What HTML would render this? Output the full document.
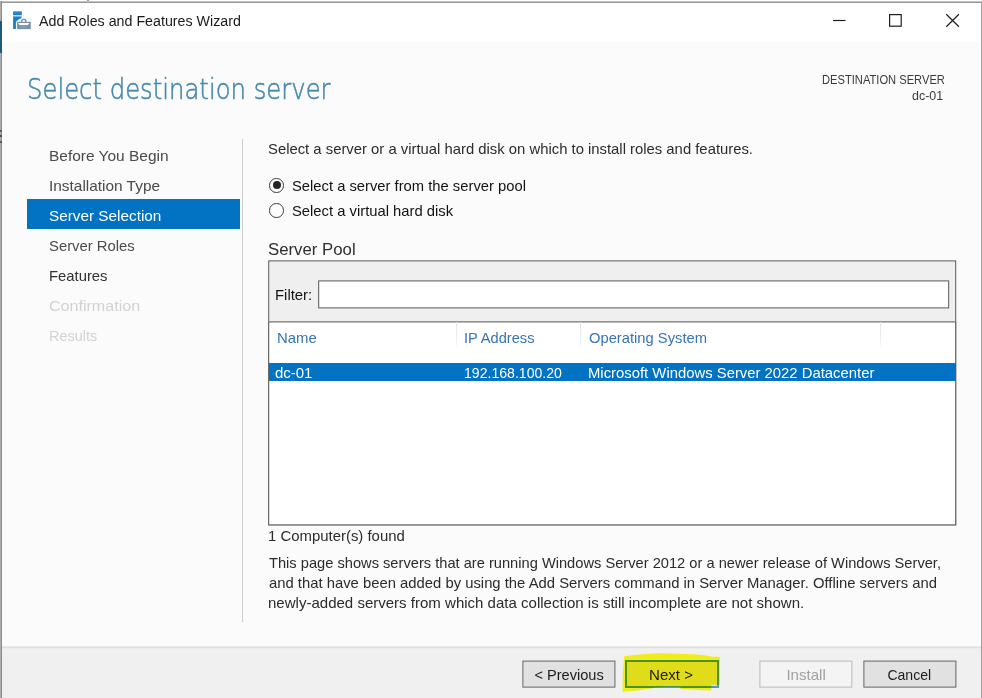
<!DOCTYPE html>
<html lang="en"><head><meta charset="utf-8"><title>Add Roles and Features Wizard</title>
<style>
html,body{margin:0;padding:0;background:#ffffff;}
#window{filter:blur(0.3px);}
body{width:982px;height:698px;overflow:hidden;background:#ffffff;position:relative;font-family:"Liberation Sans",sans-serif;}
.abs{position:absolute;}
h1,h2,p,ul,li,label{margin:0;padding:0;list-style:none;font:inherit;display:block;}
.tx{position:absolute;white-space:nowrap;transform-origin:0 50%;display:block;line-height:normal;font-weight:400;}
#edge-top1{left:0;top:1px;width:982px;height:1px;background:#c2c2c2;}
#edge-top2{left:0;top:2px;width:982px;height:1px;background:#989898;}
#edge-left{left:0;top:1px;width:2px;height:697px;background:linear-gradient(90deg,#adadad 0,#adadad 50%,#8c8c8c 50%);}
.edgemark{position:absolute;left:0;width:1.6px;background:#5e5e5e;}
#edge-left-blue{left:0;top:21px;width:2px;height:32px;background:#1f5878;}
#edge-right{left:981px;top:2px;width:1px;height:696px;background:#a2a2a2;}
#titlebar{left:2px;top:3px;width:979px;height:39px;background:#ffffff;}
#content{left:2px;top:42px;width:978px;height:604px;background:#fbfbfb;}
#footer{left:2px;top:646px;width:979px;height:52px;background:linear-gradient(#e9e9e9 0,#e9e9e9 1px,#dfdfdf 1px,#dfdfdf 2px,#ececec 2px,#ececec 3px,#f0f0f0 3px);}
#navsel{left:27px;top:199px;width:213px;height:30px;background:#0272c2;}
#vdiv{left:242px;top:139px;width:1px;height:483px;background:#cdcdcd;}
.radio{position:absolute;width:14.6px;height:14.6px;border-radius:50%;border:1.3px solid #3a3a3a;box-sizing:border-box;background:#ffffff;}
.radio i{position:absolute;left:50%;top:50%;width:8px;height:8px;margin:-4px 0 0 -4px;border-radius:50%;background:#262626;display:block;}
#poolwrap{left:0;top:0;width:982px;height:698px;transform:translate(0.2px,0.4px);}
#panel{left:268px;top:260px;width:688px;height:265px;background:#efefef;border:1px solid #5a5a5a;box-sizing:border-box;}
#filterbox{margin:0;padding:0;outline:0;border-radius:0;appearance:none;-webkit-appearance:none;left:318px;top:280px;width:631px;height:28px;background:#ffffff;border:1px solid #545454;box-sizing:border-box;}
#list{left:268px;top:321px;width:688px;height:204px;background:#ffffff;border:1px solid #4e4e4e;box-sizing:border-box;}
.colsep{position:absolute;top:322px;width:1px;height:27px;background:linear-gradient(#e2e2e2,#f0f0f0 70%,#ffffff);}
#rowsel{left:269px;top:363px;width:686.6px;height:18.2px;background:#0272c2;}
.btn{margin:0;padding:0;font:inherit;appearance:none;-webkit-appearance:none;border-radius:0;outline:0;overflow:visible;display:block;position:absolute;top:660px;width:93px;height:27px;box-sizing:border-box;border:1px solid #686868;background:#e1e1e1;transform:translate(0.4px,0.6px);}
#btn-install{background:#f4f4f4;border-color:#b8b8b8;}
#btn-next{border:2px solid #4a98d7;background:#e1e1e1;top:660px;width:94.2px;height:27.7px;transform:none;}
</style></head>
<body>
<div id="window" role="dialog" aria-label="Add Roles and Features Wizard">

<div class="abs" id="edge-tick" style="left:87px;top:0;width:2px;height:1.5px;background:#9a9a9a"></div><div class="abs" id="edge-top1"></div><div class="abs" id="edge-top2"></div>
<div class="abs" id="titlebar"></div>
<div class="abs" id="content"></div>
<div class="abs" id="footer"></div>
<div class="abs" id="edge-left"></div><div class="abs" id="edge-left-blue"></div>
<div class="abs" id="edge-right"></div>
<div class="edgemark" style="top:130.2px;height:1.6px"></div><div class="edgemark" style="top:135px;height:1.6px;background:#4e4e4e"></div><div class="edgemark" style="top:141.1px;height:1.7px"></div>

<header id="caption">
<svg class="abs" id="appicon" style="left:12px;top:10px" width="20" height="20" viewBox="0 0 20 20" aria-hidden="true">
  <rect x="1.1" y="1.4" width="8.7" height="3.7" fill="#1f7dc6"/>
  <rect x="2.2" y="2.7" width="6.5" height="0.7" fill="#3d93d6"/>
  <rect x="1.1" y="5.1" width="8.7" height="1.5" fill="#a8dff8"/>
  <path d="M1.1 6.6H9.5V8.2C7.3 8.6 5.1 10.1 3.9 12.4V19H1.1z" fill="#1f7dc6"/>
  <path d="M9.7 12.2v-.9a2.1 2.1 0 0 1 4.2 0v.9" fill="none" stroke="#d6edf9" stroke-width="2.6"/>
  <rect x="4.4" y="11.2" width="14.8" height="8.3" fill="#d6edf9"/>
  <path d="M9.7 12.2v-.9a2.1 2.1 0 0 1 4.2 0v.9" fill="none" stroke="#74899c" stroke-width="1.1"/>
  <rect x="5.1" y="11.9" width="13.6" height="7.1" fill="#7b8fa3"/>
  <path d="M6 13.1h11.3l-1.3 1.8H7.4z" fill="#ffffff"/>
  <rect x="7.6" y="15.6" width="8.2" height="2.2" fill="#8a9db0"/>
</svg>
<span id="t_title" class="tx" style="left:38.50px;top:12.00px;font-size:15.2px;color:#1a1a1a;font-family:'Liberation Sans', sans-serif;transform:scaleX(0.9377)">Add Roles and Features Wizard</span>
<svg class="abs" id="winctl" style="left:826px;top:8px" width="140" height="26" viewBox="0 0 140 26" aria-hidden="true">
  <path d="M7 12.5h12.5" stroke="#1f1f1f" stroke-width="1.2" fill="none"/>
  <rect x="63.6" y="6.6" width="11.6" height="11.6" stroke="#1f1f1f" stroke-width="1.2" fill="none"/>
  <path d="M120.3 6.3l12.6 12.4M132.9 6.3l-12.6 12.4" stroke="#1f1f1f" stroke-width="1.2" fill="none"/>
</svg>
</header>

<main id="page">
<h1><span id="t_head" class="tx" style="left:27.05px;top:72.00px;font-size:28.8px;color:#4688ad;font-family:'DejaVu Sans Light', 'DejaVu Sans', 'Liberation Sans', sans-serif;font-weight:200;-webkit-text-stroke:0.55px #4688ad;transform:scaleX(0.8442)">Select destination server</span></h1>
<div id="destserver"><span id="t_ds1" class="tx" style="left:821.85px;top:73.00px;font-size:12.4px;color:#3a3a3a;font-family:'Liberation Sans', sans-serif;transform:scaleX(0.8998)">DESTINATION SERVER</span><span id="t_ds2" class="tx" style="left:911.87px;top:89.00px;font-size:12.6px;color:#3a3a3a;font-family:'Liberation Sans', sans-serif;transform:scaleX(0.9893)">dc-01</span></div>

<nav id="steps">
<div class="abs" id="navsel"></div>
<ul>
<li><span id="t_n1" class="tx" style="left:49.19px;top:147.00px;font-size:15px;color:#4a4a4a;font-family:'Liberation Sans', sans-serif;transform:scaleX(1.0317)">Before You Begin</span></li>
<li><span id="t_n2" class="tx" style="left:48.99px;top:177.00px;font-size:15px;color:#4a4a4a;font-family:'Liberation Sans', sans-serif;transform:scaleX(1.0266)">Installation Type</span></li>
<li class="current"><span id="t_n3" class="tx" style="left:49.19px;top:207.00px;font-size:15px;color:#ffffff;font-family:'Liberation Sans', sans-serif;transform:scaleX(1.0206)">Server Selection</span></li>
<li><span id="t_n4" class="tx" style="left:49.39px;top:237.00px;font-size:15px;color:#4a4a4a;font-family:'Liberation Sans', sans-serif;transform:scaleX(0.9888)">Server Roles</span></li>
<li><span id="t_n5" class="tx" style="left:49.18px;top:267.00px;font-size:15px;color:#303030;font-family:'Liberation Sans', sans-serif;transform:scaleX(0.9878)">Features</span></li>
<li class="disabled"><span id="t_n6" class="tx" style="left:49.39px;top:297.00px;font-size:15px;color:#d2d2d2;font-family:'Liberation Sans', sans-serif;transform:scaleX(1.0715)">Confirmation</span></li>
<li class="disabled"><span id="t_n7" class="tx" style="left:49.18px;top:327.00px;font-size:15px;color:#d2d2d2;font-family:'Liberation Sans', sans-serif;transform:scaleX(0.9627)">Results</span></li>
</ul>
</nav>
<div class="abs" id="vdiv"></div>

<section id="pane">
<p><span id="t_intro" class="tx" style="left:268.32px;top:140.00px;font-size:15px;color:#2b2b2b;font-family:'Liberation Sans', sans-serif;transform:scaleX(0.9893)">Select a server or a virtual hard disk on which to install roles and features.</span></p>
<div role="radiogroup">
<label><span class="radio" id="radio1" role="radio" aria-checked="true" style="left:269.4px;top:178px"><i></i></span><span id="t_r1" class="tx" style="left:291.67px;top:177.00px;font-size:15px;color:#121212;font-family:'Liberation Sans', sans-serif;transform:scaleX(0.9845)">Select a server from the server pool</span></label>
<label><span class="radio" id="radio2" role="radio" aria-checked="false" style="left:269.4px;top:203px"></span><span id="t_r2" class="tx" style="left:291.68px;top:202.00px;font-size:15px;color:#121212;font-family:'Liberation Sans', sans-serif;transform:scaleX(0.9856)">Select a virtual hard disk</span></label>
</div>
<h2><span id="t_pool" class="tx" style="left:267.66px;top:241.00px;font-size:16px;color:#2e2e2e;font-family:'Liberation Sans', sans-serif;transform:scaleX(1.0482)">Server Pool</span></h2>
<div class="abs" id="poolwrap"><div class="abs" id="panel"></div>
<input class="abs" id="filterbox" type="text" aria-label="Filter" value="">
<div class="abs" id="list"></div></div>
<label><span id="t_filter" class="tx" style="left:275.14px;top:286.00px;font-size:15px;color:#121212;font-family:'Liberation Sans', sans-serif;transform:scaleX(0.9910)">Filter:</span></label>
<div id="grid" role="grid">
<div role="row">
<div class="colsep" style="left:456px"></div><div class="colsep" style="left:580px"></div><div class="colsep" style="left:880px"></div>
<span id="t_h1" class="tx" style="left:276.94px;top:329.00px;font-size:15px;color:#3775b5;font-family:'Liberation Sans', sans-serif;transform:scaleX(0.9940)">Name</span><span id="t_h2" class="tx" style="left:463.78px;top:329.00px;font-size:15px;color:#3775b5;font-family:'Liberation Sans', sans-serif;transform:scaleX(0.9747)">IP Address</span><span id="t_h3" class="tx" style="left:589.05px;top:329.00px;font-size:15px;color:#3775b5;font-family:'Liberation Sans', sans-serif;transform:scaleX(0.9826)">Operating System</span>
</div>
<div role="row" aria-selected="true"><div class="abs" id="rowsel"></div><span id="t_c1" class="tx" style="left:275.40px;top:364.00px;font-size:15px;color:#ffffff;font-family:'Liberation Sans', sans-serif;transform:scaleX(0.9979)">dc-01</span><span id="t_c2" class="tx" style="left:463.99px;top:364.00px;font-size:15px;color:#ffffff;font-family:'Liberation Sans', sans-serif;transform:scaleX(0.9395)">192.168.100.20</span><span id="t_c3" class="tx" style="left:588.20px;top:364.00px;font-size:15px;color:#ffffff;font-family:'Liberation Sans', sans-serif;transform:scaleX(0.9900)">Microsoft Windows Server 2022 Datacenter</span></div>
</div>
<p><span id="t_found" class="tx" style="left:268.43px;top:527.00px;font-size:15px;color:#2b2b2b;font-family:'Liberation Sans', sans-serif;transform:scaleX(0.9945)">1 Computer(s) found</span></p>
<p><span id="t_p1" class="tx" style="left:268.80px;top:554.00px;font-size:15px;color:#2b2b2b;font-family:'Liberation Sans', sans-serif;transform:scaleX(0.9770)">This page shows servers that are running Windows Server 2012 or a newer release of Windows Server,</span><span id="t_p2" class="tx" style="left:268.60px;top:574.00px;font-size:15px;color:#2b2b2b;font-family:'Liberation Sans', sans-serif;transform:scaleX(0.9883)">and that have been added by using the Add Servers command in Server Manager. Offline servers and</span><span id="t_p3" class="tx" style="left:268.40px;top:594.00px;font-size:15px;color:#2b2b2b;font-family:'Liberation Sans', sans-serif;transform:scaleX(1.0017)">newly-added servers from which data collection is still incomplete are not shown.</span></p>
</section>
</main>

<footer id="buttons">
<button class="btn" id="btn-prev" type="button" style="left:522px"><span id="t_b1" class="tx" style="left:11.33px;top:4.00px;font-size:15px;color:#1c1c1c;font-family:'Liberation Sans', sans-serif;transform:scaleX(0.9734)">&lt; Previous</span></button>
<button class="btn" id="btn-next" type="button" style="left:625px"><span id="t_b2" class="tx" style="left:22.42px;top:4.00px;font-size:15px;color:#1c1c1c;font-family:'Liberation Sans', sans-serif;transform:scaleX(1.0062)">Next &gt;</span></button>
<button class="btn" id="btn-install" type="button" disabled style="left:759px"><span id="t_b3" class="tx" style="left:25.81px;top:4.00px;font-size:15px;color:#a0a0a4;font-family:'Liberation Sans', sans-serif;transform:scaleX(1.0046)">Install</span></button>
<button class="btn" id="btn-cancel" type="button" style="left:863px"><span id="t_b4" class="tx" style="left:23.32px;top:4.00px;font-size:15px;color:#1c1c1c;font-family:'Liberation Sans', sans-serif;transform:scaleX(0.9373)">Cancel</span></button>
<svg class="abs" id="hilite" style="left:615px;top:648px;mix-blend-mode:multiply" width="115" height="50" viewBox="615 648 115 50" aria-hidden="true">
  <path d="M624.3 656.2 L632 655.3 L640 654.6 L650 653.8 L660 653.3 L670 653.5 L685 654 L698.5 654.6 L706 655.6 L712.8 656.7 L719.9 656.8 L719.9 684.8 L711.3 684.8 L711.3 690.6 L700 690.2 L690 689.6 L680.6 689.2 L680.6 686.8 L668 686.6 L656 687.2 L652 688.3 L646 689.3 L641 690 L632 691 L622.5 691.7 L622.7 680 L623 671 L623.7 662 Z" fill="#fffa1c"/>
</svg>
</footer>

</div>
</body></html>
